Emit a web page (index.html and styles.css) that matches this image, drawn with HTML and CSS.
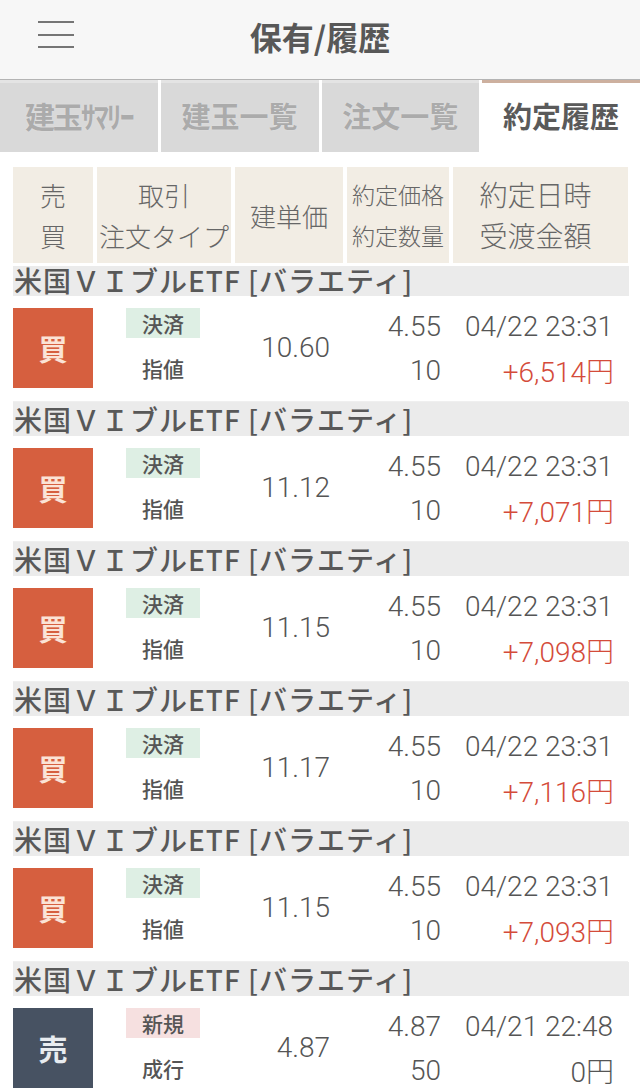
FILE: index.html
```html
<!DOCTYPE html>
<html lang="ja">
<head>
    <meta charset="UTF-8">
    <meta name="viewport" content="width=device-width, initial-scale=1.0">
    <title>保有/履歴</title>
    <link rel="stylesheet" href="styles.css">
</head>
<body>
    <!-- ヘッダー -->
    <div class="topBar">
        <div class="menuBtn">
            <span></span><span></span><span></span>
        </div>
        <h1 class="title">保有/履歴</h1>
    </div>
    <!-- タブ -->
    <ul class="tabs">
        <li>建玉ｻﾏﾘｰ</li>
        <li>建玉一覧</li>
        <li>注文一覧</li>
        <li class="current">約定履歴</li>
    </ul>
    <!-- 表の見出し -->
    <div class="listHead">
        <div class="hd"><p>売</p><p>買</p></div>
        <div class="hd"><p>取引</p><p>注文タイプ</p></div>
        <div class="hd"><p>建単価</p></div>
        <div class="hd small"><p>約定価格</p><p>約定数量</p></div>
        <div class="hd big"><p>約定日時</p><p>受渡金額</p></div>
    </div>
    <!-- 約定一覧 -->
    <div class="list">
        <div class="name first">米国ＶＩブルETF [バラエティ]</div>
        <div class="row">
            <div class="side buy">買</div>
            <div class="kind"><span class="tag close">決済</span></div>
            <div class="type">指値</div>
            <div class="cost">10.60</div>
            <div class="price">4.55</div>
            <div class="qty">10</div>
            <div class="date">04/22 23:31</div>
            <div class="amount plus">+6,514円</div>
        </div>

        <div class="name">米国ＶＩブルETF [バラエティ]</div>
        <div class="row">
            <div class="side buy">買</div>
            <div class="kind"><span class="tag close">決済</span></div>
            <div class="type">指値</div>
            <div class="cost">11.12</div>
            <div class="price">4.55</div>
            <div class="qty">10</div>
            <div class="date">04/22 23:31</div>
            <div class="amount plus">+7,071円</div>
        </div>

        <div class="name">米国ＶＩブルETF [バラエティ]</div>
        <div class="row">
            <div class="side buy">買</div>
            <div class="kind"><span class="tag close">決済</span></div>
            <div class="type">指値</div>
            <div class="cost">11.15</div>
            <div class="price">4.55</div>
            <div class="qty">10</div>
            <div class="date">04/22 23:31</div>
            <div class="amount plus">+7,098円</div>
        </div>

        <div class="name">米国ＶＩブルETF [バラエティ]</div>
        <div class="row">
            <div class="side buy">買</div>
            <div class="kind"><span class="tag close">決済</span></div>
            <div class="type">指値</div>
            <div class="cost">11.17</div>
            <div class="price">4.55</div>
            <div class="qty">10</div>
            <div class="date">04/22 23:31</div>
            <div class="amount plus">+7,116円</div>
        </div>

        <div class="name">米国ＶＩブルETF [バラエティ]</div>
        <div class="row">
            <div class="side buy">買</div>
            <div class="kind"><span class="tag close">決済</span></div>
            <div class="type">指値</div>
            <div class="cost">11.15</div>
            <div class="price">4.55</div>
            <div class="qty">10</div>
            <div class="date">04/22 23:31</div>
            <div class="amount plus">+7,093円</div>
        </div>

        <div class="name">米国ＶＩブルETF [バラエティ]</div>
        <div class="row">
            <div class="side sell">売</div>
            <div class="kind"><span class="tag open">新規</span></div>
            <div class="type">成行</div>
            <div class="cost">4.87</div>
            <div class="price">4.87</div>
            <div class="qty">50</div>
            <div class="date">04/21 22:48</div>
            <div class="amount">0円</div>
        </div>
    </div>
</body>
</html>
```

FILE: styles.css
```css
body,ul,li,h1,p{
    padding: 0;
    margin: 0;
}
body{
    width: 640px;
    height: 1088px;
    overflow: hidden;
    background: #fff;
    color: #555;
    font-family: "Roboto", "Noto Sans CJK JP", sans-serif;
}
/* ヘッダー */
.topBar{
    height: 80px;
    background: #f7f7f7;
    border-bottom: 1px solid #b4b4b4;
    box-sizing: border-box;
    display: flex;
    align-items: center;
    justify-content: center;
    position: relative;
}
.menuBtn{
    position: absolute;
    left: 38px;
    top: 21px;
    width: 36px;
    display: flex;
    flex-direction: column;
    gap: 10.5px;
}
.menuBtn span{
    display: block;
    height: 2px;
    background: #757575;
}
.title{
    font-family: "Noto Sans CJK JP", sans-serif;
    font-size: 32px;
    font-weight: 700;
    color: #585858;
    margin-top: -8px;
}
/* タブ */
.tabs{
    display: flex;
    gap: 3px;
    height: 72px;
    list-style: none;
}
.tabs li{
    flex: 1;
    background: #d9d9d9;
    border-top: 3px solid #e4e4e4;
    box-sizing: border-box;
    color: #ababab;
    font-family: "Noto Sans CJK JP", sans-serif;
    font-weight: 700;
    font-size: 29px;
    text-align: center;
    line-height: 64px;
    text-shadow: 0 0 1px #eee;
}
.tabs li:first-child{
    font-size: 30px;
    letter-spacing: -2px;
}
.tabs .current{
    background: #fff;
    border-top: 3px solid #cdb09f;
    color: #5a5a5a;
    text-shadow: none;
}
/* 見出し */
.listHead{
    display: grid;
    grid-template-columns: 80px 134px 108px 102px 175px;
    column-gap: 4px;
    margin: 15px 0 0 13px;
    height: 96px;
}
.hd{
    background: #f2ede4;
    display: flex;
    flex-direction: column;
    justify-content: center;
    align-items: center;
    font-family: "Noto Sans CJK JP", sans-serif;
    font-weight: 300;
    font-size: 26px;
    line-height: 41px;
    color: #666;
}
.hd.small{
    font-size: 23px;
}
.hd.big{
    font-size: 28px;
    padding-right: 10px;
}
/* 一覧 */
.list{
    margin: 3px 12px 0 13px;
}
.name{
    height: 34px;
    background: #ebebeb;
    margin-right: -1px;
    padding-left: 1px;
    font-family: "Noto Sans CJK JP", sans-serif;
    font-weight: 500;
    font-size: 28px;
    letter-spacing: 1px;
    line-height: 34px;
    color: #585858;
    white-space: nowrap;
}
.name.first{
    height: 30px;
    line-height: 28px;
}
.row{
    display: grid;
    grid-template-columns: 80px 134px 108px 102px 175px;
    grid-template-rows: 30px 46px;
    column-gap: 4px;
    padding: 12px 0 18px;
    height: 106px;
    box-sizing: border-box;
    border-bottom: 1px solid #efefef;
    align-items: center;
}
.side{
    grid-row: 1 / 3;
    grid-column: 1;
    height: 80px;
    align-self: start;
    display: flex;
    align-items: center;
    justify-content: center;
    font-family: "Noto Sans CJK JP", sans-serif;
    font-weight: 700;
    font-size: 29px;
}
.buy{
    background: #d65f3f;
    color: #fbe3d6;
}
.sell{
    background: #475262;
    color: #e8ecf0;
}
.kind{
    grid-column: 2;
    grid-row: 1;
    text-align: center;
    padding-right: 2px;
}
.tag{
    display: inline-block;
    width: 74px;
    height: 30px;
    line-height: 30px;
    font-family: "Noto Sans CJK JP", sans-serif;
    font-weight: 500;
    font-size: 21px;
    color: #555;
}
.tag.close{
    background: #deefe4;
}
.tag.open{
    background: #f6e0e0;
}
.type{
    grid-column: 2;
    grid-row: 2;
    text-align: center;
    padding-right: 2px;
    font-family: "Noto Sans CJK JP", sans-serif;
    font-weight: 500;
    font-size: 21px;
    margin-top: 14px;
}
.cost{
    grid-column: 3;
    grid-row: 1 / 3;
    text-align: right;
    padding-right: 13px;
    font-weight: 300;
    font-size: 28px;
    margin-top: 2px;
}
.price,.qty,.date,.amount{
    text-align: right;
    font-weight: 300;
    font-size: 28px;
}
.price{
    grid-column: 4;
    grid-row: 1;
    padding-right: 8px;
    margin-top: 6px;
}
.qty{
    grid-column: 4;
    grid-row: 2;
    padding-right: 8px;
    margin-top: 18px;
}
.date{
    grid-column: 5;
    grid-row: 1;
    padding-right: 15px;
    margin-top: 6px;
}
.amount{
    grid-column: 5;
    grid-row: 2;
    padding-right: 14px;
    margin-top: 18px;
}
.amount.plus{
    color: #d44b3a;
}
```
